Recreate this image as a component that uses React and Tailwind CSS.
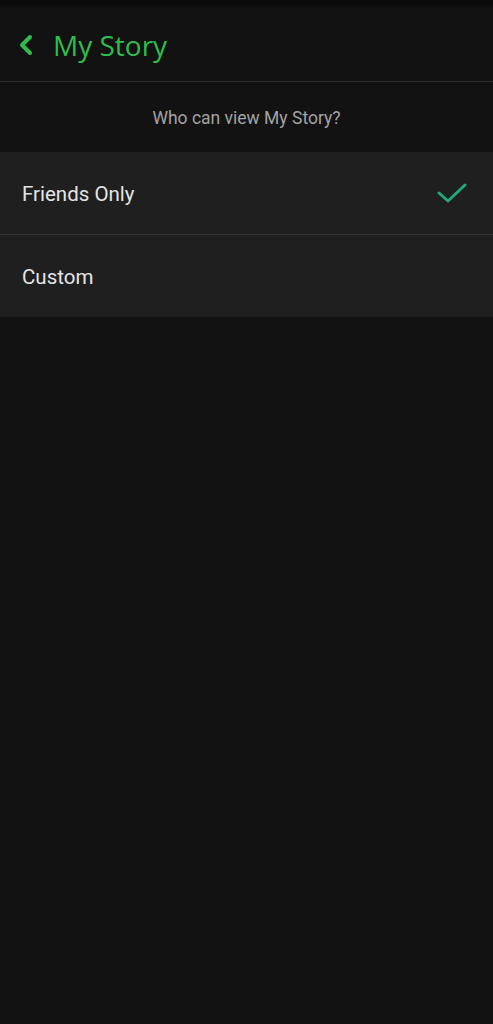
import React from 'react';

export default function App() {
  return (
    <div className="min-h-[1024px] w-full bg-[#121212] font-['Roboto',sans-serif]">
      <div className="h-[6px] bg-[#0a0a0a]" />
      <header className="flex h-[76px] items-center border-b border-[#2a2a2a] pl-[17px]">
        <svg width="18" height="24" viewBox="0 0 18 24" fill="none" className="mr-[18px] mt-[2px]">
          <path d="M13 4 L5 12 L13 20" stroke="#2ebd4d" strokeWidth="4" strokeLinecap="round" strokeLinejoin="round" />
        </svg>
        <h1 className="mt-[3px] text-[28px] leading-none text-[#2ebd4d] font-['Open_Sans',sans-serif]">My Story</h1>
      </header>
      <div className="flex h-[70px] items-center justify-center">
        <p className="mt-[2px] text-[17.5px] text-[#a3a3a3]">Who can view My Story?</p>
      </div>
      <div className="bg-[#1f1f1f]">
        <div className="flex h-[83px] items-center justify-between border-b border-[#333333] pl-[22px] pr-[26px]">
          <span className="mt-[2px] text-[20.5px] text-[#e4e4e4]">Friends Only</span>
          <svg width="30" height="22" viewBox="0 0 30 22" fill="none">
            <path d="M2 11 L11 19 L28 3" stroke="#1fa97a" strokeWidth="3" strokeLinecap="round" strokeLinejoin="round" />
          </svg>
        </div>
        <div className="flex h-[82px] items-center pl-[22px]">
          <span className="mt-[2px] text-[20.5px] text-[#e4e4e4]">Custom</span>
        </div>
      </div>
    </div>
  );
}
